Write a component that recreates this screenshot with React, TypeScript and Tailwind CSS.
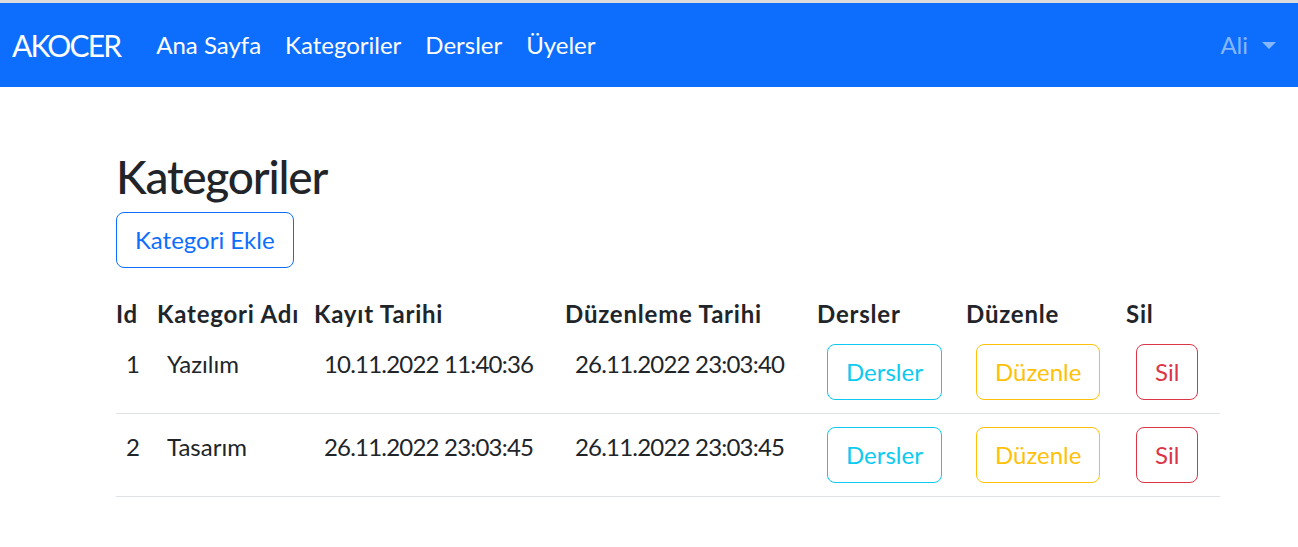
const rows = [
  { id: 1, name: "Yazılım", created: "10.11.2022 11:40:36", updated: "26.11.2022 23:03:40" },
  { id: 2, name: "Tasarım", created: "26.11.2022 23:03:45", updated: "26.11.2022 23:03:45" },
];

const font = { fontFamily: '"Segoe UI", Lato, "Open Sans", sans-serif' };

const Navbar = () => (
  <nav className="border-t-[3px] border-[#dcdcdc] bg-[#0d6efd] h-[87px] flex items-center pl-[12px] pr-[22px]">
    <a href="#" className="text-white text-[30px] tracking-[-1.8px] mr-[24px] leading-none">AKOCER</a>
    <ul className="flex items-center">
      {["Ana Sayfa", "Kategoriler", "Dersler", "Üyeler"].map((l) => (
        <li key={l}>
          <a href="#" className="text-white text-[24px] px-[12px]">{l}</a>
        </li>
      ))}
    </ul>
    <div className="ml-auto flex items-center text-[24px] text-[#86b7fe]">
      <span>Ali</span>
      <span className="ml-[14px] w-0 h-0 border-l-[7px] border-r-[7px] border-t-[7px] border-l-transparent border-r-transparent border-t-[#86b7fe]" />
    </div>
  </nav>
);

const OutlineBtn = ({ label, color }: { label: string; color: string }) => (
  <button className={`h-[56px] px-[18px] border rounded-lg text-[24px] bg-white ${color}`}>{label}</button>
);

const headers = ["Id", "Kategori Adı", "Kayıt Tarihi", "Düzenleme Tarihi", "Dersler", "Düzenle", "Sil"];

export default function App() {
  return (
    <div className="min-h-screen bg-white text-[#212529]" style={font}>
      <Navbar />
      <main className="pl-[116px] pr-[78px] pt-[61px]">
        <h2 className="text-[46px] tracking-[-1.2px] font-medium leading-[57px]">Kategoriler</h2>
        <button className="mt-[7px] h-[56px] px-[18px] border border-[#0d6efd] rounded-lg text-[24px] text-[#0d6efd]">
          Kategori Ekle
        </button>
        <table className="mt-[29px] w-[1104px] table-fixed text-[24px] leading-[36px] text-left">
          <colgroup>
            <col className="w-[41px]" />
            <col className="w-[157px]" />
            <col className="w-[251px]" />
            <col className="w-[252px]" />
            <col className="w-[149px]" />
            <col className="w-[160px]" />
            <col className="w-[94px]" />
          </colgroup>
          <thead>
            <tr className="font-bold">
              {headers.map((h) => (
                <th key={h} className="leading-[34px] tracking-[0.8px] whitespace-nowrap">{h}</th>
              ))}
            </tr>
          </thead>
          <tbody>
            {rows.map((r) => (
              <tr key={r.id} className="border-b border-[#dee2e6]">
                <td className="align-top pt-[15px] pl-[10px]">{r.id}</td>
                <td className="align-top pt-[15px] pl-[10px] whitespace-nowrap">{r.name}</td>
                <td className="align-top pt-[15px] pl-[10px] tracking-[-0.8px] whitespace-nowrap">{r.created}</td>
                <td className="align-top pt-[15px] pl-[10px] tracking-[-0.8px] whitespace-nowrap">{r.updated}</td>
                <td className="align-top py-[13px] pl-[10px]">
                  <OutlineBtn label="Dersler" color="border-[#0dcaf0] text-[#0dcaf0]" />
                </td>
                <td className="align-top py-[13px] pl-[10px]">
                  <OutlineBtn label="Düzenle" color="border-[#ffc107] text-[#ffc107]" />
                </td>
                <td className="align-top py-[13px] pl-[10px]">
                  <OutlineBtn label="Sil" color="border-[#dc3545] text-[#dc3545]" />
                </td>
              </tr>
            ))}
          </tbody>
        </table>
      </main>
    </div>
  );
}
